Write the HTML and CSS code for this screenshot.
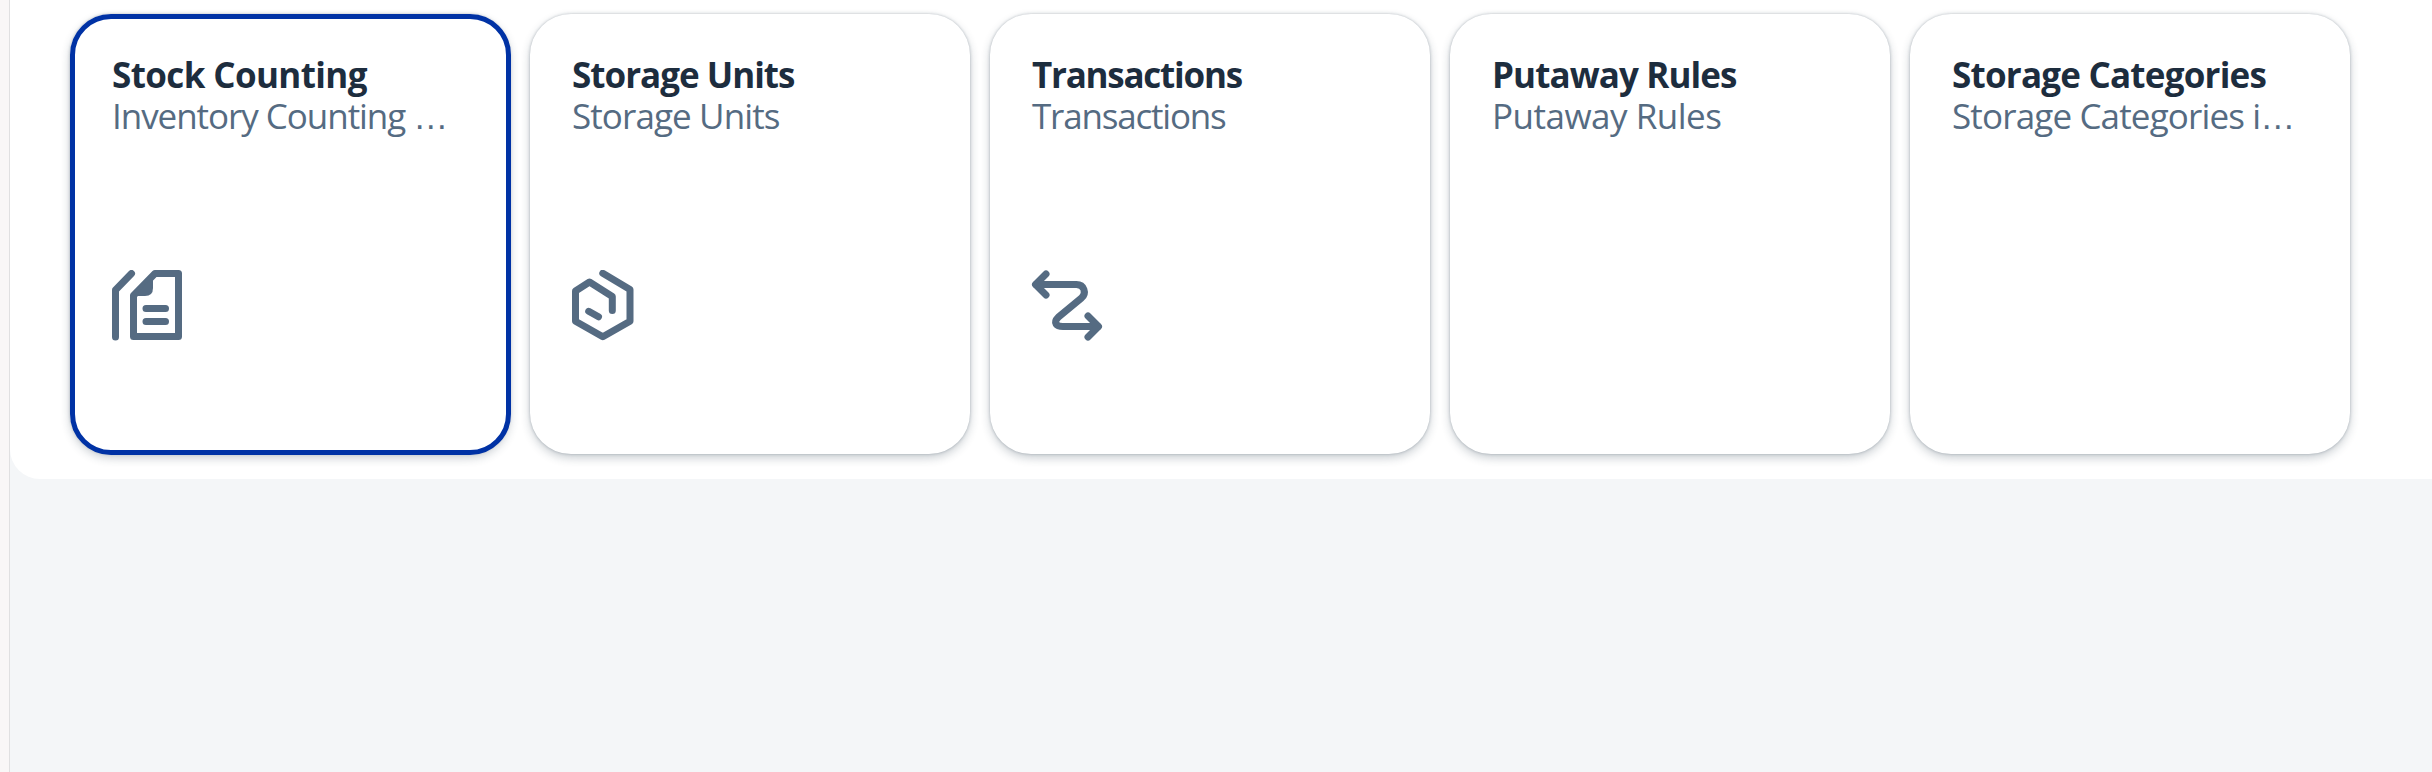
FILE: index.html
```html
<!DOCTYPE html>
<html lang="en">
<head>
<meta charset="utf-8">
<title>Inventory</title>
<link rel="stylesheet" href="styles.css">
</head>
<body>
<div class="page">
  <main class="panel">
    <a class="tile tile-focused">
      <h3 class="title t1">Stock Counting</h3>
      <p class="subtitle s1">Inventory Counting <span class="dots">…</span></p>
      <svg class="icon" viewBox="0 0 80 80"><path d="M5.500 67V20L21.500 3.500"/><path d="M23.500 66.500V25.500L45 3.500H68.500V66.500Z"/><path class="fill" d="M25 26L43 6V18Q43 26 35 26Z"/><path d="M36 38.500H55.500M36 51.500H55.500"/></svg>
    </a>
    <a class="tile">
      <h3 class="title t2">Storage Units</h3>
      <p class="subtitle s2">Storage Units</p>
      <svg class="icon" viewBox="0 0 80 80"><path d="M32.800 3.300L60 19.500V51.200L32.800 66.700L5.500 51.200V21L19.500 12L42.300 26.500V40.500"/><path d="M18.700 41.300L28.500 46.800"/></svg>
    </a>
    <a class="tile">
      <h3 class="title t3">Transactions</h3>
      <p class="subtitle s3">Transactions</p>
      <svg class="icon" viewBox="0 0 80 80"><path d="M16 4L5.500 14.500L16 25"/><path d="M6 14.500H46.500C54 14.500 57 23 51.500 28L28.500 47C22.500 53 26.500 56.500 33 56.500H68"/><path d="M58 46L68.500 56.500L58 67"/></svg>
    </a>
    <a class="tile">
      <h3 class="title t4">Putaway Rules</h3>
      <p class="subtitle s4">Putaway Rules</p>
    </a>
    <a class="tile">
      <h3 class="title t5">Storage Categories</h3>
      <p class="subtitle s5">Storage Categories i<span class="dots">…</span></p>
    </a>
  </main>
</div>
</body>
</html>
```
FILE: styles.css
```css
* { box-sizing: border-box; }
body { margin: 0; background: #f9f7f7; font-family: "Open Sans", "Noto Sans", sans-serif; }
.page { height: 772px; margin-left: 9px; border-left: 1px solid #e0e0e1; background: #f4f6f8; overflow: hidden; }
.panel { display: flex; gap: 20px; height: 479px; padding: 14px 0 0 60px; background: #fff; border-bottom-left-radius: 30px; }
.tile { position: relative; display: flex; flex-direction: column; flex: none; width: 440px; height: 440px; padding: 40px 42px 0; border-radius: 41px; background: #fff; box-shadow: 0 0 3px rgba(34, 53, 72, .3), 0 4px 10px rgba(34, 53, 72, .24); }
.tile-focused::after { content: ""; position: absolute; inset: 0 -1px -1px 0; border: 5px solid #0032a5; border-radius: 41px; }
.title, .subtitle { margin: 0; font-size: 35px; line-height: 41px; white-space: nowrap; }
.title { color: #1d2d3e; font-weight: 700; }
.subtitle { color: #556b82; font-weight: 400; }
.dots { font-family: "Liberation Sans", sans-serif; line-height: 1; letter-spacing: 0; }
.t1 { letter-spacing: -.62px; }
.s1 { letter-spacing: -1.05px; }
.t2 { letter-spacing: -1px; }
.s2 { letter-spacing: -.9px; }
.t3 { letter-spacing: -1.25px; }
.s3 { letter-spacing: -1.2px; }
.t4 { letter-spacing: -.9px; }
.s4 { letter-spacing: -.5px; }
.t5 { letter-spacing: -.78px; }
.s5 { letter-spacing: -.85px; }
.icon { width: 80px; height: 80px; margin-top: 134px; margin-left: -2px; fill: none; stroke: #556b82; stroke-width: 7px; stroke-linecap: round; stroke-linejoin: round; }
.icon .fill { fill: #556b82; stroke: none; }
```
